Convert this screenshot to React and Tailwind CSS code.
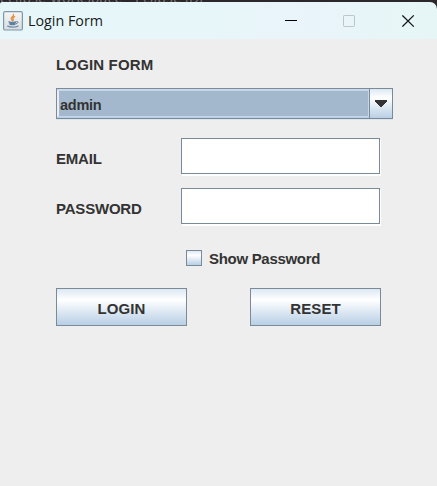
function JavaIcon() {
  return (
    <svg className="size-5 shrink-0" viewBox="0 0 20 20" fill="none">
      <defs>
        <linearGradient id="tile" x1="0" y1="0" x2="0" y2="1">
          <stop offset="0" stopColor="#f6f6f6" />
          <stop offset="1" stopColor="#d9dcde" />
        </linearGradient>
      </defs>
      <rect x="0.6" y="0.6" width="18.8" height="18.4" rx="1.6" fill="url(#tile)" stroke="#7f97ab" strokeWidth="1.2" />
      <path d="M10.4 3.400c1.200 2-2.900 2.600-2.200 4.400.2.800 1 1.200 1.300 2M11.600 5.600c-2 1-2.200 1.700-1.400 2.600.4.600.2 1-.2 1.400" stroke="#e58b3c" strokeWidth="1.300" strokeLinecap="round" />
      <path d="M6 10.800c2 .6 5 .6 6.800 0M6.400 12c1.600.6 4.400.6 6 0M7 13.300c1.400.4 3.600.4 5 0" stroke="#5d82a0" strokeWidth="1.300" strokeLinecap="round" />
      <path d="M4.600 15.200c2.500 1.200 8 1.200 10.400-.1" stroke="#6f92ae" strokeWidth="1.300" strokeLinecap="round" />
      <path d="M13.400 10.600c2.200-.5 2.100 1.700-.4 2.200" stroke="#5d82a0" strokeWidth="1" />
    </svg>
  );
}

function TitleBar() {
  return (
    <header className="flex h-[37px] shrink-0 items-center rounded-tl-[2px] rounded-tr-[7px] bg-linear-to-r from-[#e7f6f8] from-50% via-[#eaf4fb] via-65% to-[#e6f6f6] pl-[3px] pr-[22px]">
      <JavaIcon />
      <h1 className="ml-[5px] font-['Open_Sans','Noto_Sans',sans-serif] text-[14.3px] leading-5 tracking-normal text-[#171b1c]">
        Login Form
      </h1>
      <div className="ml-auto flex items-center">
        <svg className="h-3 w-3" viewBox="0 0 12 12" shapeRendering="crispEdges">
          <path d="M0 5h12v1H0z" fill="#000" />
        </svg>
        <svg className="ml-[46px] h-3 w-3" viewBox="0 0 12 12" fill="none">
          <rect x="0.5" y="0.5" width="11" height="11" rx="0.8" stroke="#bac6c8" />
        </svg>
        <svg className="ml-[47px] h-3 w-[13px]" viewBox="0 0 13 12" fill="none">
          <path d="M.4.400l11.400 11.200M11.800.400L.4 11.600" stroke="#111619" strokeWidth="1.250" />
        </svg>
      </div>
    </header>
  );
}

function RoleSelect() {
  return (
    <div className="mt-[13px] flex h-[31px] w-[337px] border border-[#7a8a99] shadow-[0_1px_0_#dbe5ee]">
      <div className="flex flex-1 border-y border-t-[#cbdbea] border-b-[#b8cfe5] bg-[#b8cfe5]">
        <div className="flex flex-1 items-center border border-l-2 border-[#c4d6e7] border-l-[#e8eef4] bg-[#a3b8cc] pl-px">
          <span className="pt-[2px] text-[14.5px] leading-5 tracking-[-0.25px]">admin</span>
        </div>
      </div>
      <div className="flex w-[23px] items-center justify-center border-l border-[#7a8a99] bg-linear-to-b from-[#dde8f3] via-white via-30% to-[#b8cfe5] pr-px">
        <svg className="h-[7px] w-3" viewBox="0 0 12 7" shapeRendering="crispEdges">
          <path d="M0 0h12v1L7 7H5L0 1z" fill="#333" />
        </svg>
      </div>
    </div>
  );
}

function Field({ label, type }) {
  return (
    <label className="flex h-[36px] items-center">
      <span className="w-[125px] pt-[5px] text-[15px] leading-5 tracking-[-0.2px]">{label}</span>
      <input
        type={type}
        className="h-[36px] w-[199px] border border-[#7a8a99] bg-white shadow-[1px_2px_0_white] outline-none"
      />
    </label>
  );
}

function Button({ children }) {
  return (
    <button className="h-[38px] w-[131px] border border-[#7a8a99] bg-linear-to-b from-[#dde8f3] via-white via-30% to-[#b8cfe5] pt-[3px] text-[15px] font-bold leading-5 tracking-[0.1px]">
      {children}
    </button>
  );
}

export default function App() {
  return (
    <div className="flex h-[486px] w-[437px] flex-col overflow-hidden bg-[#2b272b] font-['Liberation_Sans',Arial,sans-serif] text-[#333]">
      <div className="flex h-[2px] shrink-0 items-end overflow-hidden font-['Open_Sans',sans-serif] text-[14px] leading-[10px] text-[#7b777b]">
        <span className="-mb-px whitespace-pre tracking-[0.2px]">eclipse-workspace - Eclipse IDE</span>
      </div>
      <TitleBar />
      <main className="flex flex-1 flex-col bg-[#eee] pl-[56px] pt-[16px] font-bold">
        <h2 className="h-5 text-[15px] leading-5 tracking-[0.15px]">LOGIN FORM</h2>
        <RoleSelect />
        <div className="mt-[19px] flex flex-col gap-[14px]">
          <Field label="EMAIL" type="text" />
          <Field label="PASSWORD" type="password" />
        </div>
        <label className="ml-[130px] mt-[24px] flex h-5 items-center">
          <span className="size-4 border border-[#7a8a99] bg-linear-to-b from-[#dde8f3] via-white via-30% to-[#b8cfe5]" />
          <span className="ml-[7px] pt-px text-[15px] leading-5 tracking-[-0.3px]">Show Password</span>
        </label>
        <div className="mt-[20px] flex gap-[63px]">
          <Button>LOGIN</Button>
          <Button>RESET</Button>
        </div>
      </main>
    </div>
  );
}
